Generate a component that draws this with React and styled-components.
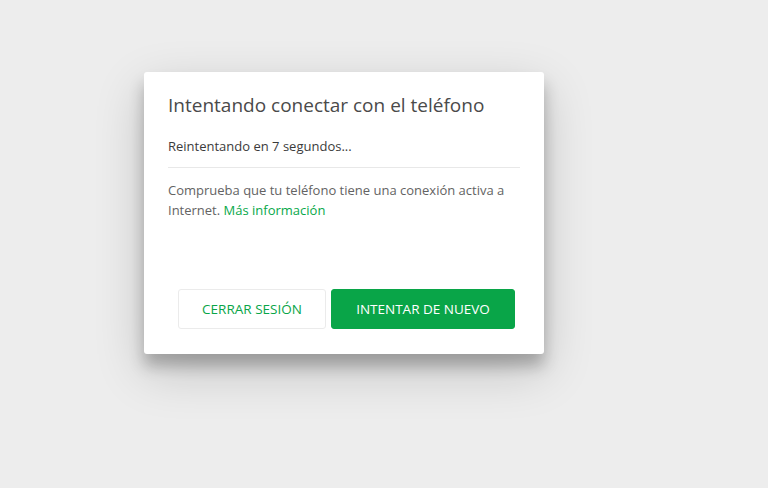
import React from "react";
import styled, { createGlobalStyle } from "styled-components";

const Global = createGlobalStyle`
  html, body { margin: 0; padding: 0; background: #ededed; }
  body { font-family: "Open Sans", "Noto Sans", sans-serif; -webkit-font-smoothing: antialiased; }
  #root { min-height: 488px; }
`;

const Page = styled.div`
  box-sizing: border-box;
  width: 768px;
  height: 488px;
  padding: 72px 0 0 144px;
  display: flex;
  align-items: flex-start;
`;

const Dialog = styled.div`
  box-sizing: border-box;
  width: 400px;
  height: 282px;
  background: #fff;
  border-radius: 3px;
  box-shadow: 0 17px 50px 0 rgba(0, 0, 0, 0.19), 0 12px 15px 0 rgba(0, 0, 0, 0.24);
  padding: 20px 24px 25px 24px;
  display: flex;
  flex-direction: column;
`;

const Title = styled.h1`
  margin: 0;
  font-size: 19px;
  line-height: 26px;
  font-weight: 400;
  color: #4a4a4a;
`;

const Status = styled.div`
  margin-top: 18px;
  padding-bottom: 11px;
  font-size: 13px;
  line-height: 20px;
  color: #3b3b3b;
  border-bottom: 1px solid #e8e8e8;
`;

const Body = styled.p`
  margin: 12px 0 0;
  font-size: 13px;
  line-height: 20px;
  color: #636363;
`;

const Link = styled.a`
  color: #07a84a;
  text-decoration: none;
`;

const Footer = styled.div`
  margin-top: auto;
  display: flex;
  justify-content: flex-end;
  gap: 5px;
  padding-right: 5px;
`;

const Button = styled.button`
  box-sizing: border-box;
  height: 40px;
  width: ${(p) => p.$w}px;
  border-radius: 3px;
  font-family: inherit;
  font-size: 13.5px;
  text-transform: uppercase;
  cursor: pointer;
  border: 1px solid ${(p) => (p.$primary ? "#09a548" : "#ebebeb")};
  background: ${(p) => (p.$primary ? "#09a548" : "#fff")};
  color: ${(p) => (p.$primary ? "#fff" : "#09a548")};
`;

export default function App() {
  return (
    <>
      <Global />
      <Page>
        <Dialog>
          <Title>Intentando conectar con el teléfono</Title>
          <Status>Reintentando en 7 segundos...</Status>
          <Body>
            Comprueba que tu teléfono tiene una conexión activa a Internet.{" "}
            <Link href="#">Más información</Link>
          </Body>
          <Footer>
            <Button $w={148}>Cerrar sesión</Button>
            <Button $w={184} $primary>
              Intentar de nuevo
            </Button>
          </Footer>
        </Dialog>
      </Page>
    </>
  );
}
